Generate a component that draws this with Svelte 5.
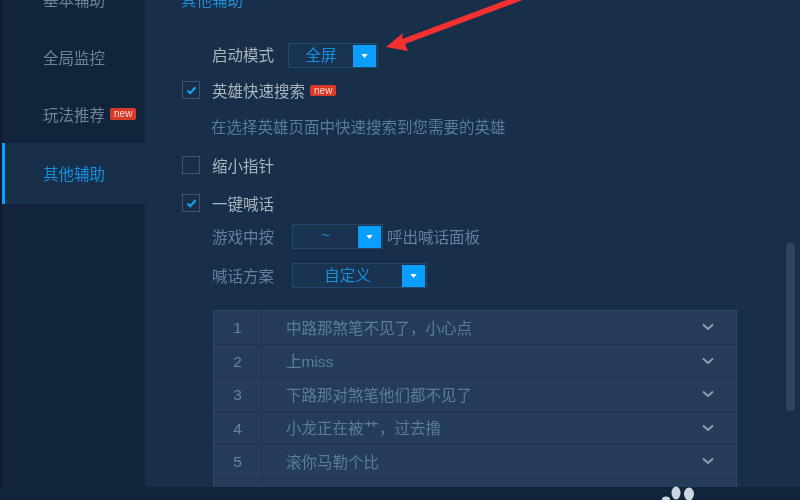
<script>
    const navItems = [
        { label: '基本辅助' },
        { label: '全局监控' },
        { label: '玩法推荐', isNew: true },
        { label: '其他辅助', active: true }
    ];
    const phrases = ['中路那煞笔不见了，小心点', '上miss', '下路那对煞笔他们都不见了', '小龙正在被艹，过去撸', '滚你马勒个比', ''];
</script>

<div class="page">
    <div class="main">
        <nav class="sidebar">
            {#each navItems as item}
                <div class="nav-item" class:active={item.active}>
                    <span>{item.label}</span>
                    {#if item.isNew}<span class="badge">new</span>{/if}
                </div>
            {/each}
        </nav>

        <section class="content">
            <h3>其他辅助</h3>

            <div class="row start-row">
                <span class="label">启动模式</span>
                <div class="select narrow">
                    <span class="value">全屏</span>
                    {@render caret()}
                </div>
            </div>

            <div class="check-row hero-row">
                {@render checkbox(true)}
                <span class="label">英雄快速搜索</span>
                <span class="badge small">new</span>
            </div>
            <p class="desc">在选择英雄页面中快速搜索到您需要的英雄</p>

            <div class="check-row shrink-row">
                {@render checkbox(false)}
                <span class="label">缩小指针</span>
            </div>

            <div class="check-row shout-row">
                {@render checkbox(true)}
                <span class="label">一键喊话</span>
            </div>

            <div class="row key-row">
                <span class="sub">游戏中按</span>
                <div class="select mid">
                    <span class="value">~</span>
                    {@render caret()}
                </div>
                <span class="sub after">呼出喊话面板</span>
            </div>

            <div class="row plan-row">
                <span class="sub">喊话方案</span>
                <div class="select wide">
                    <span class="value">自定义</span>
                    {@render caret()}
                </div>
            </div>

            <div class="table">
                {#each phrases as text, i}
                    <div class="tr">
                        <span class="num">{i < 5 ? i + 1 : ''}</span>
                        <span class="text">{text}</span>
                        <svg class="chev" width="12" height="8" viewBox="0 0 12 8">
                            <path d="M1 1.5 6 6l5-4.5" fill="none" stroke="#8fa0b2" stroke-width="1.8" />
                        </svg>
                    </div>
                {/each}
            </div>
        </section>
    </div>
    <div class="footer"></div>

    <!-- annotations on top of the screenshot -->
    <div class="scrollbar"></div>
    <svg class="overlay" width="800" height="500" viewBox="0 0 800 500">
        <polygon points="386,47 403,33 402,39 512,-2 528,-2 405,44 408,51" fill="#f5302f" />
        <ellipse cx="676" cy="493" rx="4.5" ry="6.5" fill="#cdd6de" />
        <ellipse cx="689" cy="494" rx="5" ry="6.5" fill="#cdd6de" />
        <ellipse cx="666" cy="499" rx="4" ry="2.5" fill="#cdd6de" />
    </svg>
</div>

{#snippet caret()}
    <span class="caret">
        <svg width="7" height="4" viewBox="0 0 8 5"><path d="M0 0h8L4 5z" fill="#ffffff" /></svg>
    </span>
{/snippet}

{#snippet checkbox(on)}
    <span class="box">
        {#if on}
            <svg width="11" height="9" viewBox="0 0 12 10">
                <path d="M1.5 5 4.5 8 10.5 1.5" fill="none" stroke="#14a0f5" stroke-width="2.4" />
            </svg>
        {/if}
    </span>
{/snippet}

<style>
:global(body) { margin: 0; background: #12243b; }
.page {
    position: relative; width: 800px; height: 500px; overflow: hidden;
    display: flex; flex-direction: column;
    font-family: "Liberation Sans", "Noto Sans CJK SC", sans-serif;
    font-size: 15.5px; filter: blur(0.6px);
}
.main { display: flex; height: 487px; overflow: hidden; }
.footer { height: 13px; background: #12243b; }

.sidebar {
    width: 143px; flex: none; background: #12243b;
    border-left: 2px solid #0d1a2c; margin-top: -29.5px;
}
.nav-item {
    height: 57.5px; display: flex; align-items: center; gap: 5px;
    padding-left: 41px; color: #6f8296; box-sizing: border-box;
}
.nav-item.active {
    height: 61px; background: #182f49; color: #1391e0;
    border-left: 3px solid #0a9eff; padding-left: 38px;
    padding-bottom: 2px;
}
.badge {
    background: #d8392a; color: #f7d9c8; font-size: 10px; line-height: 12px;
    padding: 0 4px; border-radius: 2px;
}
.badge.small { margin-left: -7px; line-height: 11px; }

.content {
    flex: 1; background: #182f49; padding-left: 37px;
    display: flex; flex-direction: column; align-items: flex-start;
}
h3 {
    margin: -11px 0 0 -1px; height: 24px; line-height: 24px;
    font-size: 15.5px; font-weight: 400; color: #1c8fd8;
}
.row, .check-row { display: flex; align-items: center; height: 25px; }
.label { color: #aab4be; padding-bottom: 1px; }
.sub { color: #64809c; width: 80px; flex: none; padding-bottom: 2px; }
.start-row { margin: 30px 0 0 30px; }
.start-row .label { width: 76px; padding-bottom: 3px; }
.key-row { margin: 12px 0 0 30px; }
.plan-row { margin: 14px 0 0 30px; }
.sub.after { margin-left: 4px; width: auto; }

.check-row { height: 18px; gap: 12px; }
.hero-row { margin-top: 13px; }
.shrink-row { margin-top: 18px; }
.shout-row { margin-top: 20px; }
.box {
    width: 18px; height: 18px; box-sizing: border-box; flex: none;
    border: 1px solid #3e546c; display: flex; align-items: center; justify-content: center;
}
.desc { margin: 19px 0 0 29px; height: 20px; line-height: 20px; color: #5a7a9a; }

.select {
    height: 25px; box-sizing: border-box; display: flex; align-items: center;
    background: #1a3350; border: 1px solid #22496b; padding-right: 1px;
}
.select.narrow { width: 90px; }
.select.mid { width: 91px; }
.select.wide { width: 135px; }
.value { flex: 1; text-align: center; color: #1391e0; padding-bottom: 3px; }
.caret {
    width: 23px; height: 22px; background: #0a9eff; flex: none;
    display: flex; align-items: center; justify-content: center;
}

.table {
    margin: 22px 0 0 31px; width: 524px; flex: none;
    background: #253d58; border: 1px solid #2c4663; box-sizing: border-box;
}
.tr {
    height: 33.5px; display: flex; align-items: center; box-sizing: border-box;
    border-bottom: 1px solid #1e344e; color: #5b7c9b;
}
.num {
    width: 47px; height: 100%; flex: none; text-align: center; line-height: 33px;
    border-right: 1px solid #1e344e; color: #6485a5;
}
.text { flex: 1; padding-left: 24px; padding-bottom: 1px; }
.chev { margin-right: 22px; flex: none; }

.scrollbar {
    position: absolute; left: 786px; top: 243px; width: 9px; height: 168px;
    background: #2f455c; border-radius: 4px;
}
.overlay { position: absolute; left: 0; top: 0; pointer-events: none; }
</style>
